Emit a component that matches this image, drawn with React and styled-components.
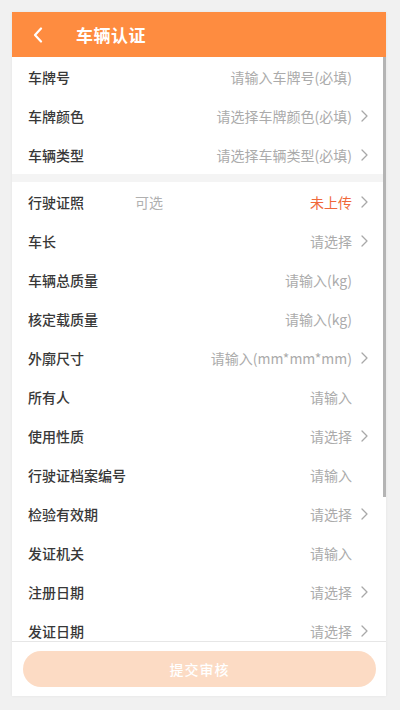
import React from "react";
import styled, { createGlobalStyle } from "styled-components";

const Global = createGlobalStyle`
  html, body { margin: 0; padding: 0; background: #f1f1f1; }
  body { font-family: "Noto Sans CJK SC", "Noto Sans", sans-serif; }
  * { box-sizing: border-box; }
`;

const Frame = styled.div`
  margin: 12px;
  width: 374px;
  height: 684px;
  background: #fff;
  display: flex;
  flex-direction: column;
  box-shadow: 0 0 3px rgba(0,0,0,0.06);
`;

const Header = styled.div`
  height: 45px;
  flex: none;
  background: #fe8c40;
  display: flex;
  align-items: center;
  padding-left: 21px;
  gap: 33px;
`;

const Title = styled.div`
  color: #fff;
  font-size: 17px;
  font-weight: 700;
  letter-spacing: 0.5px;
`;

const Content = styled.div`
  flex: 1;
  overflow: hidden;
  position: relative;
`;

const Section = styled.div`
  display: flex;
  flex-direction: column;
`;

const GapBand = styled.div`
  height: 8px;
  background: #f4f4f4;
`;

const Row = styled.div`
  height: 39px;
  flex: none;
  display: flex;
  align-items: center;
  padding: 0 17px 0 16px;
`;

const Label = styled.div`
  font-size: 14px;
  color: #383838;
  font-weight: 500;
  width: ${p => (p.$narrow ? "107px" : "auto")};
`;

const Hint = styled.div`
  font-size: 14px;
  color: #b0b0b0;
`;

const Value = styled.div`
  margin-left: auto;
  font-size: 14px;
  color: ${p => (p.$warn ? "#f0683a" : "#ababab")};
  white-space: nowrap;
`;

const ChevronSlot = styled.div`
  width: 8px;
  margin-left: 9px;
  display: flex;
  align-items: center;
  visibility: ${p => (p.$show ? "visible" : "hidden")};
`;

const Thumb = styled.div`
  position: absolute;
  right: 0;
  top: 0;
  width: 3px;
  height: 440px;
  background: #b4b4b4;
`;

const Footer = styled.div`
  height: 55px;
  flex: none;
  border-top: 1px solid #e6e6e6;
  padding: 9px 10px 9px 11px;
`;

const Submit = styled.button`
  width: 100%;
  height: 36px;
  border: none;
  border-radius: 18px;
  background: #fcdbc4;
  color: #fff;
  font-family: inherit;
  font-size: 14px;
  font-weight: 500;
  letter-spacing: 1px;
`;

const Chevron = () => (
  <svg width="7" height="12" viewBox="0 0 7 12">
    <polyline points="1,1 6,6 1,11" fill="none" stroke="#a8a8a8" strokeWidth="1.3" strokeLinecap="round" strokeLinejoin="round" />
  </svg>
);

const BackIcon = () => (
  <svg width="10" height="16" viewBox="0 0 10 16">
    <polyline points="8,1.5 2,8 8,14.5" fill="none" stroke="#fff" strokeWidth="2.2" strokeLinecap="round" strokeLinejoin="round" />
  </svg>
);

const top = [
  { label: "车牌号", value: "请输入车牌号(必填)", arrow: false },
  { label: "车牌颜色", value: "请选择车牌颜色(必填)", arrow: true },
  { label: "车辆类型", value: "请选择车辆类型(必填)", arrow: true },
];

const rest = [
  { label: "车长", value: "请选择", arrow: true },
  { label: "车辆总质量", value: "请输入(kg)", arrow: false },
  { label: "核定载质量", value: "请输入(kg)", arrow: false },
  { label: "外廓尺寸", value: "请输入(mm*mm*mm)", arrow: true },
  { label: "所有人", value: "请输入", arrow: false },
  { label: "使用性质", value: "请选择", arrow: true },
  { label: "行驶证档案编号", value: "请输入", arrow: false },
  { label: "检验有效期", value: "请选择", arrow: true },
  { label: "发证机关", value: "请输入", arrow: false },
  { label: "注册日期", value: "请选择", arrow: true },
  { label: "发证日期", value: "请选择", arrow: true },
];

const Field = ({ label, value, arrow }) => (
  <Row>
    <Label>{label}</Label>
    <Value>{value}</Value>
    <ChevronSlot $show={arrow}><Chevron /></ChevronSlot>
  </Row>
);

export default function App() {
  return (
    <>
      <Global />
      <Frame>
        <Header>
          <BackIcon />
          <Title>车辆认证</Title>
        </Header>
        <Content>
          <Section>
            {top.map(f => <Field key={f.label} {...f} />)}
          </Section>
          <GapBand />
          <Section>
            <Row>
              <Label $narrow>行驶证照</Label>
              <Hint>可选</Hint>
              <Value $warn>未上传</Value>
              <ChevronSlot $show><Chevron /></ChevronSlot>
            </Row>
            {rest.map(f => <Field key={f.label} {...f} />)}
          </Section>
          <Thumb />
        </Content>
        <Footer>
          <Submit>提交审核</Submit>
        </Footer>
      </Frame>
    </>
  );
}
